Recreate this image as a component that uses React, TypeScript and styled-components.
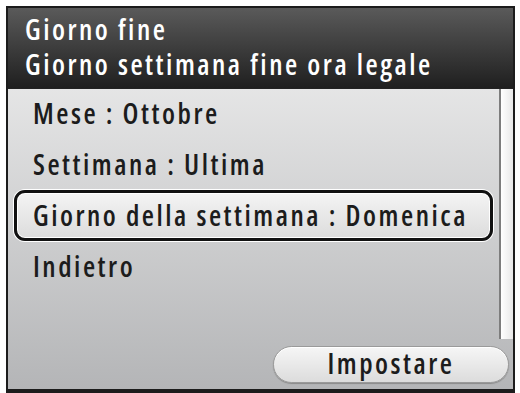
import React from "react";
import styled, { createGlobalStyle } from "styled-components";

const Global = createGlobalStyle`
  html, body { margin: 0; padding: 0; background: #ffffff; }
  body { font-family: "Open Sans", "DejaVu Sans", sans-serif; }
`;

const Screen = styled.div`
  box-sizing: border-box;
  margin: 6px 0 0 6px;
  width: 509px;
  height: 387px;
  border: 2px solid #1c1c1c;
  border-bottom-width: 4px;
  display: flex;
  flex-direction: column;
  background: linear-gradient(#f2f2f2, #b4b5b7);
  font-family: "Open Sans", "DejaVu Sans", sans-serif;
  font-stretch: 75%;
  font-weight: 600;
  font-size: 28px;
  letter-spacing: 2.5px;
`;

const Header = styled.div`
  height: 81px;
  padding: 0 0 2px 17px;
  box-sizing: border-box;
  display: flex;
  flex-direction: column;
  justify-content: center;
  background: linear-gradient(#5a5a5a, #1f1f1f);
  color: #ffffff;
  line-height: 35px;
  border-bottom: 1px solid #222;
`;

const Upper = styled.div`
  flex: 1;
  display: flex;
`;

const List = styled.div`
  flex: 1;
  display: flex;
  flex-direction: column;
  padding: 0 6px;
  margin-top: -1px;
`;

const Row = styled.div<{ $selected?: boolean }>`
  box-sizing: border-box;
  height: 51px;
  display: flex;
  align-items: center;
  padding: 0 0 2px 16px;
  color: #1c1c1c;
  border-radius: 11px;
  border: 3px solid ${(p) => (p.$selected ? "#111" : "transparent")};
  box-shadow: ${(p) => (p.$selected ? "inset 0 0 0 1px #fff, 0 0 0 1px #fff" : "none")};
  background: ${(p) => (p.$selected ? "linear-gradient(#f4f4f4, #dcdcdc)" : "transparent")};
`;

const Track = styled.div`
  width: 12px;
  border-left: 2px solid #7d7d7d;
  background: linear-gradient(90deg, #ffffff, #e8e8e8);
`;

const Footer = styled.div`
  height: 50px;
  display: flex;
  justify-content: flex-end;
  align-items: center;
  padding-right: 4px;
`;

const Button = styled.div`
  box-sizing: border-box;
  width: 236px;
  height: 37px;
  padding-bottom: 2px;
  border-radius: 19px;
  background: linear-gradient(#f6f6f6, #dcdcdc);
  border: 1px solid #9a9a9a;
  box-shadow: inset 0 1px 0 #ffffff, 0 1px 1px #8a8a8a;
  display: flex;
  align-items: center;
  justify-content: center;
  color: #1c1c1c;
`;

export default function App() {
  return (
    <>
      <Global />
      <Screen>
        <Header>
          <div>Giorno fine</div>
          <div>Giorno settimana fine ora legale</div>
        </Header>
        <Upper>
          <List>
            <Row>Mese : Ottobre</Row>
            <Row>Settimana : Ultima</Row>
            <Row $selected>Giorno della settimana : Domenica</Row>
            <Row>Indietro</Row>
          </List>
          <Track />
        </Upper>
        <Footer>
          <Button>Impostare</Button>
        </Footer>
      </Screen>
    </>
  );
}
